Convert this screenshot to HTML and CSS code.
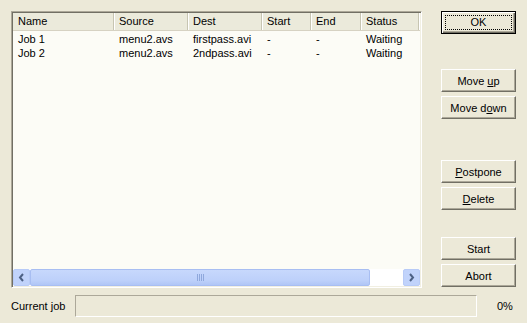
FILE: index.html
```html
<!DOCTYPE html>
<html>
<head>
  <title>Job Queue</title>
  <link rel="stylesheet" href="styles.css">
</head>
<body>
  <div class="dialog">
    <div class="main-row">
      <!-- Job list -->
      <div class="list-box">
        <div class="list-header">
          <div class="col col-name">Name</div>
          <div class="col col-source">Source</div>
          <div class="col col-dest">Dest</div>
          <div class="col col-start">Start</div>
          <div class="col col-end">End</div>
          <div class="col col-status">Status</div>
        </div>
        <div class="list-body">
          <div class="list-row">
            <div class="col col-name">Job 1</div>
            <div class="col col-source">menu2.avs</div>
            <div class="col col-dest">firstpass.avi</div>
            <div class="col col-start">-</div>
            <div class="col col-end">-</div>
            <div class="col col-status">Waiting</div>
          </div>
          <div class="list-row">
            <div class="col col-name">Job 2</div>
            <div class="col col-source">menu2.avs</div>
            <div class="col col-dest">2ndpass.avi</div>
            <div class="col col-start">-</div>
            <div class="col col-end">-</div>
            <div class="col col-status">Waiting</div>
          </div>
        </div>
        <div class="hscroll">
          <div class="scroll-btn">
            <svg width="9" height="9" viewBox="0 0 9 9"><path d="M6 1 L3 4.5 L6 8" fill="none" stroke="#4D6185" stroke-width="2"/></svg>
          </div>
          <div class="scroll-thumb">
            <span class="grip"></span>
          </div>
          <div class="scroll-track"></div>
          <div class="scroll-btn">
            <svg width="9" height="9" viewBox="0 0 9 9"><path d="M3 1 L6 4.5 L3 8" fill="none" stroke="#4D6185" stroke-width="2"/></svg>
          </div>
        </div>
      </div>

      <!-- Buttons -->
      <div class="buttons">
        <button class="btn btn-default"><span class="focus">OK</span></button>
        <button class="btn gap-a">Move <u>u</u>p</button>
        <button class="btn">Move d<u>o</u>wn</button>
        <button class="btn gap-b"><u>P</u>ostpone</button>
        <button class="btn"><u>D</u>elete</button>
        <button class="btn gap-c">Start</button>
        <button class="btn">Abort</button>
      </div>
    </div>

    <div class="status-row">
      <div class="status-label">Current job</div>
      <div class="progress"></div>
      <div class="percent">0%</div>
    </div>
  </div>
</body>
</html>
```

FILE: styles.css
```css
/* Classic dialog look */
body {
  margin: 0;
  background-color: #ECE9D8;
  color: #000;
  font-family: "Liberation Sans", Arial, sans-serif;
  font-size: 11px;
}

.dialog {
  padding: 11px 0 0 11px;
  width: 516px;
}

.main-row {
  display: flex;
  align-items: flex-start;
}

/* List view */
.list-box {
  width: 407px;
  height: 273px;
  display: flex;
  flex-direction: column;
  border: 1px solid;
  border-color: #ACA899 #FFFFFF #FFFFFF #ACA899;
  box-shadow: inset 1px 1px 0 #716F64, inset -1px -1px 0 #F1EFE2;
  padding: 1px;
  background-color: #FCFCF6;
}

.list-header {
  display: flex;
  height: 17px;
  background-color: #EBEADB;
  border-bottom: 1px solid #D6D2C2;
}

.list-header .col {
  line-height: 17px;
  border-right: 1px solid #C7C5B2;
  box-shadow: 1px 0 0 #FFFFFF;
}

.list-body {
  flex: 1;
  padding-top: 1px;
}

.list-row {
  display: flex;
  height: 14px;
  line-height: 14px;
}

.col {
  padding-left: 5px;
  box-sizing: border-box;
  white-space: nowrap;
  overflow: hidden;
}

.col-name   { width: 101px; }
.col-source { width: 74px; }
.col-dest   { width: 74px; }
.col-start  { width: 49px; }
.col-end    { width: 50px; }
.col-status { width: 58px; }

/* Horizontal scroll bar */
.hscroll {
  display: flex;
  height: 17px;
  background-color: #FFFFFF;
}

.scroll-btn {
  width: 17px;
  height: 17px;
  box-sizing: border-box;
  border: 1px solid #B8CBF7;
  border-radius: 2px;
  background-color: #C1D3FB;
  display: flex;
  align-items: center;
  justify-content: center;
}

.scroll-thumb {
  width: 340px;
  box-sizing: border-box;
  border: 1px solid #A8BEF2;
  border-radius: 2px;
  background: linear-gradient(#C7D8FC, #BDD0FA 70%, #B0C6F6);
  display: flex;
  align-items: center;
  justify-content: center;
}

.grip {
  width: 7px;
  height: 7px;
  background: repeating-linear-gradient(90deg, #8FA8DC 0 1px, transparent 1px 2px);
}

.scroll-track {
  flex: 1;
}

/* Side buttons */
.buttons {
  display: flex;
  flex-direction: column;
  margin-left: 19px;
}

.btn {
  width: 75px;
  height: 23px;
  margin: 4px 0 0 0;
  padding: 0;
  font-family: inherit;
  font-size: 11px;
  color: #000;
  background-color: #ECE9D8;
  border: 1px solid;
  border-color: #FFFFFF #716F64 #716F64 #FFFFFF;
  box-shadow: inset -1px -1px 0 #ACA899;
}

.btn-default {
  margin-top: 0;
  border-color: #000;
  box-shadow: inset 1px 1px 0 #FFFFFF, inset -1px -1px 0 #716F64, inset -2px -2px 0 #ACA899;
  padding: 3px;
}

.btn-default .focus {
  display: block;
  height: 100%;
  box-sizing: border-box;
  border: 1px dotted #000;
  line-height: 13px;
}

.gap-a { margin-top: 35px; }
.gap-b { margin-top: 41px; }
.gap-c { margin-top: 27px; }

/* Bottom status line */
.status-row {
  display: flex;
  align-items: center;
  margin-top: 7px;
}

.status-label {
  width: 64px;
}

.progress {
  width: 400px;
  height: 20px;
  border: 1px solid;
  border-color: #ACA899 #FFFFFF #FFFFFF #ACA899;
}

.percent {
  margin-left: 20px;
}
```
